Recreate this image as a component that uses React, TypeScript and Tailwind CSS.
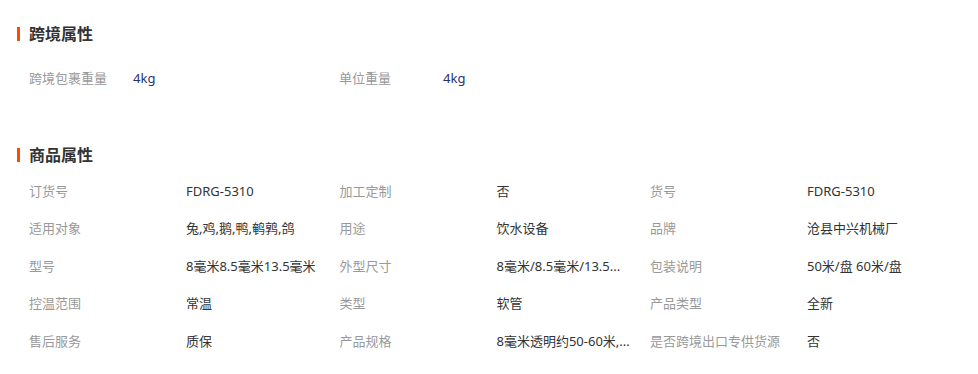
import React from "react";

const font = { fontFamily: '"Noto Sans", "Noto Sans CJK SC", sans-serif' };

function Title({ text }: { text: string }) {
  return (
    <div className="flex items-center gap-[9px] h-[20px]">
      <div className="w-[3px] h-[14px] bg-[#ff4a00]" />
      <div className="text-[16px] font-bold text-[#333] leading-[20px]">{text}</div>
    </div>
  );
}

type Cell = [string, string];

const rows: Cell[][] = [
  [["订货号", "FDRG-5310"], ["加工定制", "否"], ["货号", "FDRG-5310"]],
  [["适用对象", "兔,鸡,鹅,鸭,鹌鹑,鸽"], ["用途", "饮水设备"], ["品牌", "沧县中兴机械厂"]],
  [["型号", "8毫米8.5毫米13.5毫米"], ["外型尺寸", "8毫米/8.5毫米/13.5..."], ["包装说明", "50米/盘 60米/盘"]],
  [["控温范围", "常温"], ["类型", "软管"], ["产品类型", "全新"]],
  [["售后服务", "质保"], ["产品规格", "8毫米透明约50-60米,..."], ["是否跨境出口专供货源", "否"]],
];

export default function App() {
  return (
    <div className="w-[978px] h-[374px] bg-white pl-[17px] pt-[24px]" style={font}>
      <Title text="跨境属性" />
      <div className="pl-[12px] mt-[16px] flex h-[37.5px] items-center text-[13px]">
        <div className="w-[310px] flex">
          <div className="w-[104px] text-[#999]">跨境包裹重量</div>
          <div className="text-[#29306a]">4kg</div>
        </div>
        <div className="w-[310px] flex">
          <div className="w-[104px] text-[#999]">单位重量</div>
          <div className="text-[#29306a]">4kg</div>
        </div>
      </div>
      <div className="mt-[47px]">
        <Title text="商品属性" />
      </div>
      <div className="pl-[12px] mt-[8px] text-[13px]">
        {rows.map((r, i) => (
          <div key={i} className="flex h-[37.5px] items-center">
            {r.map(([k, v], j) => (
              <div key={j} className={j === 2 ? "flex" : "w-[310.5px] flex"}>
                <div className="w-[157px] text-[#999] whitespace-nowrap">{k}</div>
                <div className="text-[#333] whitespace-nowrap">{v}</div>
              </div>
            ))}
          </div>
        ))}
      </div>
    </div>
  );
}
